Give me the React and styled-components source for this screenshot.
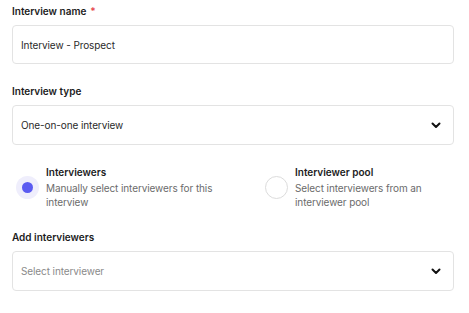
import React from 'react'
import styled, { createGlobalStyle } from 'styled-components'

const Global = createGlobalStyle`
  body {
    margin: 0;
    background: #fff;
    font-family: Inter, "Noto Sans", sans-serif;
    color: #1a1a1a;
  }
`

const Form = styled.div`
  width: 442px;
  padding: 4px 0 0 12px;
`

const Field = styled.div`
  margin-bottom: 20px;
`

const Label = styled.div`
  font-size: 10px;
  line-height: 14px;
  font-weight: 600;
  color: #1c1c1c;
  margin-bottom: 7px;
`

const Required = styled.span`
  color: #e5484d;
  margin-left: 4px;
`

const Box = styled.div`
  box-sizing: border-box;
  height: ${p => p.tall ? 40 : 39}px;
  border: 1px solid #e3e3e3;
  border-radius: 4px;
  display: flex;
  align-items: center;
  justify-content: space-between;
  padding: 0 12px 0 8px;
  font-size: 10px;
  letter-spacing: -0.1px;
  color: ${p => p.muted ? '#8a8a8a' : '#2a2a2a'};
`

const RadioGroup = styled.div`
  display: grid;
  grid-template-columns: 249px 1fr;
  padding-left: 4px;
  margin-bottom: 21px;
`

const RadioItem = styled.div`
  display: flex;
  align-items: center;
  gap: 7px;
`

const Circle = styled.div`
  box-sizing: border-box;
  width: 23px;
  height: 23px;
  flex: none;
  border-radius: 50%;
  display: flex;
  align-items: center;
  justify-content: center;
  background: ${p => p.checked ? '#efeefc' : '#fff'};
  border: ${p => p.checked ? 'none' : '1px solid #dcdcdc'};

  &::after {
    content: '';
    display: ${p => p.checked ? 'block' : 'none'};
    width: 11px;
    height: 11px;
    border-radius: 50%;
    background: #5b5bf1;
  }
`

const RadioText = styled.div`
  font-size: 10px;
  line-height: 14px;
`

const RadioTitle = styled.div`
  font-weight: 600;
  color: #1c1c1c;
  margin-bottom: 2px;
`

const RadioDesc = styled.div`
  color: #6b6b6b;
  letter-spacing: -0.1px;
`

const Chevron = () => (
  <svg width='10' height='7' viewBox='0 0 10 7'>
    <path d='M1.5 1.5 L5 5 L8.5 1.5' fill='none' stroke='#111' strokeWidth='2' strokeLinecap='round' strokeLinejoin='round' />
  </svg>
)

function Radio ({ checked, title, children }) {
  return (
    <RadioItem>
      <Circle checked={checked} />
      <RadioText>
        <RadioTitle>{title}</RadioTitle>
        <RadioDesc>{children}</RadioDesc>
      </RadioText>
    </RadioItem>
  )
}

export default function App () {
  return (
    <Form>
      <Global />
      <Field>
        <Label>Interview name<Required>*</Required></Label>
        <Box>Interview - Prospect</Box>
      </Field>
      <Field>
        <Label>Interview type</Label>
        <Box tall>One-on-one interview<Chevron /></Box>
      </Field>
      <RadioGroup>
        <Radio checked title='Interviewers'>
          Manually select interviewers for this<br />interview
        </Radio>
        <Radio title='Interviewer pool'>
          Select interviewers from an<br />interviewer pool
        </Radio>
      </RadioGroup>
      <Field>
        <Label>Add interviewers</Label>
        <Box tall muted>Select interviewer<Chevron /></Box>
      </Field>
    </Form>
  )
}
